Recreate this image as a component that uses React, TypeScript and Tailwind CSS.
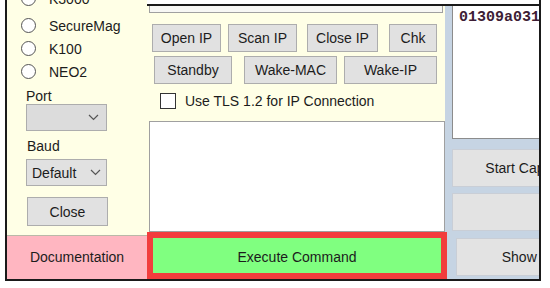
import React from 'react';

const btn =
  'flex shrink-0 items-center justify-center bg-[#e1e1e1] border border-[#adadad] text-[14px] leading-none text-[#1c1c1c]';

function Radio({ label, first }: { label: string; first?: boolean }) {
  return (
    <div className={`flex h-[23px] items-center ${first ? '-mt-[13px] mb-[4px]' : ''}`}>
      <span className="ml-[14px] h-[15px] w-[15px] rounded-full border border-[#555] bg-white" />
      <span className="ml-[13px] leading-none">{label}</span>
    </div>
  );
}

function Chevron() {
  return (
    <svg width="11" height="7" viewBox="0 0 11 7">
      <polyline points="1,1 5.5,5.5 10,1" fill="none" stroke="#555" strokeWidth="1.2" />
    </svg>
  );
}

export default function App() {
  return (
    <div className="h-[288px] w-[550px] overflow-hidden bg-white font-['Liberation_Sans',sans-serif] text-[14px] text-[#1c1c1c]">
      <div className="ml-[5px] flex h-[281px] w-[536px] overflow-hidden border-x-2 border-b-2 border-[#1a1a1a]">
        {/* Left column: device + serial settings */}
        <div className="flex w-[140px] shrink-0 flex-col">
          <div className="flex h-[235px] flex-col overflow-hidden bg-[#ffffe6]">
            <Radio label="K3000" first />
            <Radio label="SecureMag" />
            <Radio label="K100" />
            <Radio label="NEO2" />
            <div className="ml-[19px] mt-[6px] h-[15px] leading-[15px]">Port</div>
            <div className="ml-[19px] flex h-[27px] w-[81px] items-center justify-end border border-[#adadad] bg-[#dcdcdc] pr-[7px]">
              <Chevron />
            </div>
            <div className="ml-[20px] mt-[8px] h-[15px] leading-[15px]">Baud</div>
            <div className="ml-[19px] mt-[5px] flex h-[27px] w-[81px] items-center justify-between border border-[#adadad] bg-[#e1e1e1] pl-[5px] pr-[5px]">
              <span className="leading-none">Default</span>
              <Chevron />
            </div>
            <div className={`${btn} ml-[20px] mt-[11px] h-[29px] w-[81px]`}>Close</div>
          </div>
          <div className="h-px bg-[#b9b9a8]" />
          <div className="flex flex-1 items-center justify-center bg-[#ffb6c1]">Documentation</div>
        </div>

        {/* Middle column: IP controls */}
        <div className="mt-[4px] flex w-[298px] shrink-0 flex-col border-t-2 border-[#1a1a1a] bg-[#ffffe6]">
          <div className="ml-[2px] h-[7px] w-[294px] border-x border-b border-[#a0a0a0] bg-[#f7f7f4]" />
          <div className="mt-[11px] flex h-[28px]">
            <div className={`${btn} ml-[5px] w-[69px]`}>Open IP</div>
            <div className={`${btn} ml-[7px] w-[69px]`}>Scan IP</div>
            <div className={`${btn} ml-[10px] w-[71px]`}>Close IP</div>
            <div className={`${btn} ml-[11px] w-[48px]`}>Chk</div>
          </div>
          <div className="mt-[4px] flex h-[28px]">
            <div className={`${btn} ml-[7px] w-[78px]`}>Standby</div>
            <div className={`${btn} ml-[12px] w-[93px]`}>Wake-MAC</div>
            <div className={`${btn} ml-[7px] w-[93px]`}>Wake-IP</div>
          </div>
          <div className="mt-[9px] flex h-[16px] items-center">
            <span className="ml-[13px] h-[16px] w-[16px] border border-[#333] bg-white" />
            <span className="ml-[9px] leading-none">Use TLS 1.2 for IP Connection</span>
          </div>
          <div className="ml-[2px] mt-[12px] h-[111px] w-[296px] border border-[#a0a0a0] bg-white" />
          <div className="relative z-10 flex h-[47px] w-[300px] items-center justify-center border-[6px] border-[#f23d3d] bg-[#80ff80] pt-[3px]">
            Execute Command
          </div>
        </div>

        {/* Right column: capture output */}
        <div className="mt-[4px] flex flex-1 flex-col overflow-hidden border-t-2 border-[#1a1a1a] bg-[#c6d4e3]">
          <div className="ml-[7px] h-[133px] w-[120px] shrink-0 border-b border-l border-[#8c8c8c] bg-white pl-[6px] pt-[1px] font-['Liberation_Mono',monospace] text-[15px] font-bold text-[#3d1d35]">
            01309a0314
          </div>
          <div className={`${btn} ml-[7px] mt-[10px] h-[38px] w-[150px] border-[#c9ced6] bg-[#e3e3e3]`}>Start Capture</div>
          <div className={`${btn} ml-[7px] mt-[6px] h-[38px] w-[150px] border-[#c9ced6] bg-[#e3e3e3]`} />
          <div className={`${btn} ml-[11px] mt-[7px] h-[38px] w-[160px] border-[#c9ced6] bg-[#e3e3e3]`}>Show Data</div>
        </div>
      </div>
    </div>
  );
}
